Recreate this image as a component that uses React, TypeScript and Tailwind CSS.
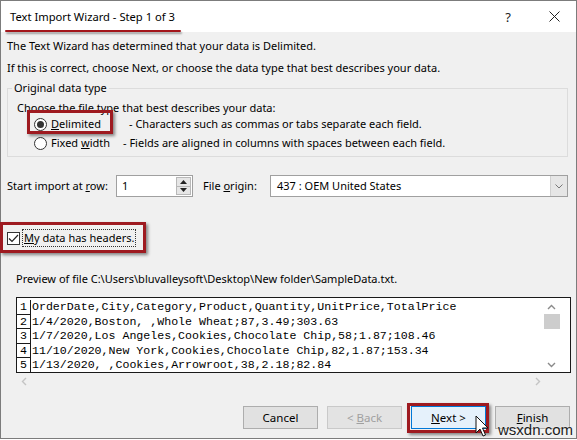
import React from 'react';

const previewRows = [
  'OrderDate,City,Category,Product,Quantity,UnitPrice,TotalPrice',
  '1/4/2020,Boston, ,Whole Wheat;87,3.49;303.63',
  '1/7/2020,Los Angeles,Cookies,Chocolate Chip,58;1.87;108.46',
  '11/10/2020,New York,Cookies,Chocolate Chip,82,1.87;153.34',
  '1/13/2020, ,Cookies,Arrowroot,38,2.18;82.84',
];

// red highlight frame drawn over controls
const Mark = ({ className }: { className: string }) => (
  <span className={`pointer-events-none absolute border-[3px] border-[#9e1a20] shadow-[2px_2px_3px_rgba(0,0,0,0.45)] ${className}`} />
);

const Radio = ({ checked }: { checked?: boolean }) => (
  <span className="flex h-[13px] w-[13px] shrink-0 items-center justify-center rounded-full border border-[#333] bg-white">
    {checked && <span className="h-[7px] w-[7px] rounded-full bg-[#333]" />}
  </span>
);

const Btn = ({ children, variant }: { children: React.ReactNode; variant?: 'default' | 'disabled' }) => {
  const look =
    variant === 'default'
      ? 'border-[#0078d7] bg-[#e5f1fb] text-black'
      : variant === 'disabled'
        ? 'border-[#c9c9c9] bg-[#e3e3e3] text-[#a0a0a0]'
        : 'border-[#adadad] bg-[#e1e1e1] text-black';
  return <div className={`flex h-[23px] w-[75px] items-center justify-center border ${look}`}>{children}</div>;
};

export default function App() {
  return (
    <div className="h-[440px] w-[577px] bg-white font-['Noto_Sans',sans-serif] text-[11px] leading-[16px] text-black">
      <div className="relative flex h-[439px] flex-col border border-[#7c7c7c] bg-[#f0f0f0]">
        {/* title bar */}
        <div className="flex h-[31px] shrink-0 items-center bg-white pl-[9px] pr-[16px]">
          <span className="relative text-[11.2px]">
            Text Import Wizard - Step 1 of 3
            <span className="absolute bottom-[-7px] left-[-5px] right-[-6px] h-[2px] rounded-full bg-[#a3161b] shadow-[1px_2px_2px_rgba(0,0,0,0.35)]" />
          </span>
          <span className="ml-auto text-[13px] text-[#222]">?</span>
          <svg className="ml-[38px]" width="11" height="11" viewBox="0 0 11 11">
            <path d="M0.5 0.5 L10.5 10.5 M10.5 0.5 L0.5 10.5" stroke="#222" strokeWidth="1" />
          </svg>
        </div>

        <div className="flex flex-col pl-[6px] pr-[8px]">
          <p className="mt-[6px]">The Text Wizard has determined that your data is Delimited.</p>
          <p className="mt-[6px]">If this is correct, choose Next, or choose the data type that best describes your data.</p>

          {/* Original data type group */}
          <fieldset className="mt-[4px] border border-[#dcdcdc] px-[9px] pb-[5px]">
            <legend className="-ml-[5px] px-[2px]">Original data type</legend>
            <p className="mt-[4px]">Choose the file type that best describes your data:</p>
            <div className="flex h-[16px] items-center">
              <span className="relative ml-[17px] flex items-center">
                <Radio checked />
                <span className="ml-[4px] w-[78px]">
                  <span className="underline">D</span>elimited
                </span>
                <Mark className="-left-[7px] -top-[6px] h-[24px] w-[86px]" />
              </span>
              <span>- Characters such as commas or tabs separate each field.</span>
            </div>
            <div className="mt-[3px] flex h-[16px] items-center">
              <span className="ml-[17px] flex items-center">
                <Radio />
                <span className="ml-[4px] w-[72px]">
                  Fixed <span className="underline">w</span>idth
                </span>
              </span>
              <span>- Fields are aligned in columns with spaces between each field.</span>
            </div>
          </fieldset>

          {/* start row / origin */}
          <div className="mt-[18px] flex h-[22px] items-center">
            <span className="w-[109px]">
              Start import at <span className="underline">r</span>ow:
            </span>
            <div className="flex h-[22px] w-[77px] border border-[#a0a0a0] bg-white">
              <span className="flex-1 pl-[5px] leading-[20px]">1</span>
              <div className="my-[1px] mr-[1px] flex w-[15px] flex-col">
                <div className="flex flex-1 items-center justify-center border border-[#b8b8b8] bg-[#e6e6e6]">
                  <svg width="7" height="4" viewBox="0 0 7 4"><path d="M0 4 L3.5 0 L7 4 Z" fill="#222" /></svg>
                </div>
                <div className="flex flex-1 items-center justify-center border border-t-0 border-[#b8b8b8] bg-[#e6e6e6]">
                  <svg width="7" height="4" viewBox="0 0 7 4"><path d="M0 0 L3.5 4 L7 0 Z" fill="#222" /></svg>
                </div>
              </div>
            </div>
            <span className="ml-[10px] w-[67px]">
              File <span className="underline">o</span>rigin:
            </span>
            <div className="flex h-[22px] flex-1 border border-[#a0a0a0] bg-white">
              <span className="flex-1 pl-[6px] leading-[20px]">437 : OEM United States</span>
              <div className="flex w-[17px] items-center justify-center border-l border-[#d0d0d0] bg-[#e6e6e6]">
                <svg width="8" height="5" viewBox="0 0 8 5"><path d="M0.5 0.5 L4 4 L7.5 0.5" stroke="#777" fill="none" /></svg>
              </div>
            </div>
          </div>

          {/* headers checkbox */}
          <div className="relative mt-[32px] flex h-[18px] items-center">
            <span className="flex h-[13px] w-[13px] items-center justify-center border border-[#333] bg-white">
              <svg width="11" height="9" viewBox="0 0 11 9"><path d="M1 4.5 L4 7.5 L10 1" stroke="#222" strokeWidth="1.2" fill="none" /></svg>
            </span>
            <span className="ml-[2px] border border-dotted border-[#333] px-[1px] leading-[16px]">
              <span className="underline">M</span>y data has headers.
            </span>
            <Mark className="-left-[7px] -top-[7px] h-[31px] w-[146px]" />
          </div>

          <p className="ml-[9px] mt-[24px]">Preview of file C:\Users\bluvalleysoft\Desktop\New folder\SampleData.txt.</p>

          {/* preview grid */}
          <div className="-mr-[3px] ml-[9px] mt-[10px] flex h-[76px] overflow-hidden border border-[#1a1a1a] bg-white">
            <div className="flex-1 pt-[2px] font-['Liberation_Mono',monospace] text-[11.6px]">
              {previewRows.concat('').map((row, i) => (
                <div key={i} className="flex h-[14.5px] leading-[14.5px]">
                  <span className="w-[14px] shrink-0 border-b border-r border-[#1a1a1a] text-center">{row ? i + 1 : ''}</span>
                  <span className="whitespace-pre pl-[1px]">{row}</span>
                </div>
              ))}
            </div>
            <div className="mr-[10px] flex w-[17px] flex-col items-center">
              <svg className="mt-[6px]" width="9" height="6" viewBox="0 0 9 6"><path d="M1 5 L4.5 1.5 L8 5" stroke="#8a8a8a" strokeWidth="1.4" fill="none" /></svg>
              <div className="mt-[4px] h-[15px] w-[16px] bg-[#cdcdcd]" />
              <svg className="mt-auto mb-[4px]" width="9" height="6" viewBox="0 0 9 6"><path d="M1 1 L4.5 4.5 L8 1" stroke="#8a8a8a" strokeWidth="1.4" fill="none" /></svg>
            </div>
          </div>
          <div className="-mr-[3px] ml-[9px] flex h-[17px] items-center justify-between pl-[5px] pr-[30px]">
            <svg width="6" height="9" viewBox="0 0 6 9"><path d="M5 1 L1.5 4.5 L5 8" stroke="#c4c4c4" strokeWidth="1.4" fill="none" /></svg>
            <svg width="6" height="9" viewBox="0 0 6 9"><path d="M1 1 L4.5 4.5 L1 8" stroke="#c4c4c4" strokeWidth="1.4" fill="none" /></svg>
          </div>

          {/* wizard buttons */}
          <div className="-mr-[2px] mt-[16px] flex justify-end gap-[9px] text-[11.5px]">
            <Btn>Cancel</Btn>
            <Btn variant="disabled">
              &lt; <span className="ml-[3px] underline">B</span>ack
            </Btn>
            <div className="relative">
              <Btn variant="default">
                <span className="underline">N</span>ext &gt;
              </Btn>
              <Mark className="-left-[4px] -top-[3px] h-[30px] w-[82px]" />
            </div>
            <Btn>
              <span className="underline">F</span>inish
            </Btn>
          </div>
        </div>

        {/* mouse pointer over Next */}
        <svg className="absolute left-[474px] top-[414px]" width="14" height="24" viewBox="0 0 14 24">
          <path d="M1 1 L1 18 L5 14 L8 21 L10.5 20 L7.5 13 L13 13 Z" fill="white" stroke="#111" strokeWidth="1" strokeLinejoin="round" />
        </svg>
        <span className="absolute left-[497px] top-[420px] font-['Liberation_Sans',sans-serif] text-[15px] leading-[18px] text-[#1c1c1c] [text-shadow:0_0_2px_white]">
          wsxdn.com
        </span>
      </div>
    </div>
  );
}
